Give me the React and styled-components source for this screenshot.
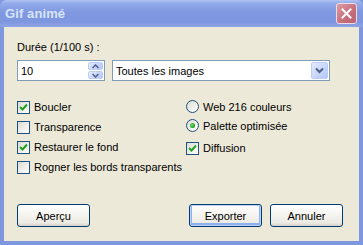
import React from 'react';
import styled, { createGlobalStyle, css } from 'styled-components';

const GlobalStyle = createGlobalStyle`
  html, body { margin: 0; padding: 0; background: #ece9d8; }
  body { font-family: "Liberation Sans", Arial, sans-serif; font-size: 11px; color: #000; }
`;

const Window = styled.div`
  width: 363px;
  height: 245px;
  box-sizing: border-box;
  display: flex;
  flex-direction: column;
  background: #7f97df;
  padding: 0 4px 4px 4px;
`;

const TitleBar = styled.div`
  height: 27px;
  margin: 0 -4px;
  padding: 0 6px 0 5px;
  display: flex;
  align-items: center;
  justify-content: space-between;
  border-radius: 6px 6px 0 0;
  background: linear-gradient(#b0c3f2 0%, #94abea 12%, #7f98e0 45%, #7d96df 80%, #8ea5e6 100%);
`;

const Title = styled.span`
  font-family: "Liberation Sans", Arial, sans-serif;
  font-weight: bold;
  font-size: 13px;
  color: #d8e4f8;
  letter-spacing: 0.1px;
`;

const CloseButton = styled.div`
  width: 19px;
  height: 19px;
  border: 1px solid #ecdce6;
  border-radius: 3px;
  background: linear-gradient(135deg, #dc9ca4 0%, #c8707e 55%, #bb6070 100%);
  display: flex;
  align-items: center;
  justify-content: center;
`;

const Body = styled.div`
  flex: 1;
  background: #ece9d8;
  padding: 14px 16px 14px 13px;
  display: flex;
  flex-direction: column;
`;

const Label = styled.div`
  line-height: 13px;
  height: 13px;
  margin-bottom: 6px;
`;

const Controls = styled.div`
  display: flex;
  gap: 7px;
  height: 21px;
`;

const Field = styled.div`
  box-sizing: border-box;
  height: 21px;
  border: 1px solid #7f9db9;
  background: #fff;
  display: flex;
  align-items: stretch;
  width: ${p => p.$width}px;
`;

const FieldText = styled.div`
  flex: 1;
  padding-left: 3px;
  display: flex;
  align-items: center;
`;

const SpinBox = styled.div`
  width: 15px;
  display: flex;
  flex-direction: column;
  gap: 1px;
  padding: 1px 1px 1px 0;
`;

const spinFace = css`
  box-sizing: border-box;
  border: 1px solid #bccef5;
  border-radius: 2px;
  background: linear-gradient(135deg, #e2eafd 0%, #c6d5fb 60%, #b4c7f5 100%);
  display: flex;
  align-items: center;
  justify-content: center;
`;

const SpinHalf = styled.div`
  ${spinFace}
  flex: 1;
`;

const DropButton = styled.div`
  ${spinFace}
  width: 17px;
  margin: 1px 1px 1px 0;
`;

const Options = styled.div`
  margin-top: 16px;
  display: grid;
  grid-template-columns: 169px 1fr;
`;

const Column = styled.div`
  display: flex;
  flex-direction: column;
`;

const OptionRow = styled.div`
  display: flex;
  align-items: center;
  gap: 4px;
  height: ${p => p.$h || 20}px;
  margin-top: ${p => p.$mt || 0}px;
`;

const CheckBox = styled.div`
  box-sizing: border-box;
  width: 13px;
  height: 13px;
  border: 1px solid #1c5180;
  background: linear-gradient(135deg, #dcdcd7 0%, #f0f0ea 55%, #ffffff 100%);
  display: flex;
  align-items: center;
  justify-content: center;
`;

const Radio = styled.div`
  box-sizing: border-box;
  width: 13px;
  height: 13px;
  border-radius: 50%;
  border: 1px solid #1c5180;
  background: linear-gradient(135deg, #dcdcd7 0%, #f0f0ea 55%, #ffffff 100%);
  display: flex;
  align-items: center;
  justify-content: center;
  &::after {
    content: "";
    display: ${p => (p.$on ? 'block' : 'none')};
    width: 5px;
    height: 5px;
    border-radius: 50%;
    background: radial-gradient(circle at 40% 40%, #6ee46e 0%, #21a121 60%, #1a8a1a 100%);
  }
`;

const Buttons = styled.div`
  margin-top: auto;
  display: flex;
  align-items: center;
  gap: 8px;
`;

const Button = styled.div`
  box-sizing: border-box;
  width: 73px;
  height: 23px;
  border: 1px solid #003c74;
  border-radius: 3px;
  background: linear-gradient(#ffffff 0%, #f4f3ee 50%, #ebeae3 85%, #d6d0c5 100%);
  display: flex;
  align-items: center;
  justify-content: center;
  margin-left: ${p => p.$push ? 'auto' : '0'};
  ${p => p.$default && css`
    box-shadow: inset 0 0 0 1px #bdd2f6, inset 0 -1px 0 2px #8fb0ee;
  `}
`;

const Check = () => (
  <svg width="9" height="9" viewBox="0 0 9 9">
    <path d="M1 4 L3.5 6.5 L8 1.5" fill="none" stroke="#21a121" strokeWidth="2" />
  </svg>
);

const Chevron = ({ up }) => (
  <svg width="7" height="5" viewBox="0 0 7 5">
    <path d={up ? 'M0.5 4 L3.5 1 L6.5 4' : 'M0.5 1 L3.5 4 L6.5 1'} fill="none" stroke="#4d6185" strokeWidth="1.5" />
  </svg>
);

const Option = ({ kind, on, children, h, mt }) => (
  <OptionRow $h={h} $mt={mt}>
    {kind === 'radio' ? <Radio $on={on} /> : <CheckBox>{on && <Check />}</CheckBox>}
    <span>{children}</span>
  </OptionRow>
);

export default function App() {
  return (
    <>
      <GlobalStyle />
      <Window>
        <TitleBar>
          <Title>Gif animé</Title>
          <CloseButton>
            <svg width="11" height="11" viewBox="0 0 11 11">
              <path d="M1.5 1.5 L9.5 9.5 M9.5 1.5 L1.5 9.5" stroke="#fff" strokeWidth="2" strokeLinecap="square" />
            </svg>
          </CloseButton>
        </TitleBar>
        <Body>
          <Label>Durée (1/100 s) :</Label>
          <Controls>
            <Field $width={88}>
              <FieldText>10</FieldText>
              <SpinBox>
                <SpinHalf><Chevron up /></SpinHalf>
                <SpinHalf><Chevron /></SpinHalf>
              </SpinBox>
            </Field>
            <Field $width={218}>
              <FieldText>Toutes les images</FieldText>
              <DropButton>
                <svg width="9" height="7" viewBox="0 0 9 7">
                  <path d="M1 1.5 L4.5 5 L8 1.5" fill="none" stroke="#4d6185" strokeWidth="2" />
                </svg>
              </DropButton>
            </Field>
          </Controls>
          <Options>
            <Column>
              <Option on>Boucler</Option>
              <Option>Transparence</Option>
              <Option on>Restaurer le fond</Option>
              <Option>Rogner les bords transparents</Option>
            </Column>
            <Column>
              <Option kind="radio" h={19}>Web 216 couleurs</Option>
              <Option kind="radio" on h={19}>Palette optimisée</Option>
              <Option on mt={3}>Diffusion</Option>
            </Column>
          </Options>
          <Buttons>
            <Button>Aperçu</Button>
            <Button $push $default>Exporter</Button>
            <Button>Annuler</Button>
          </Buttons>
        </Body>
      </Window>
    </>
  );
}
